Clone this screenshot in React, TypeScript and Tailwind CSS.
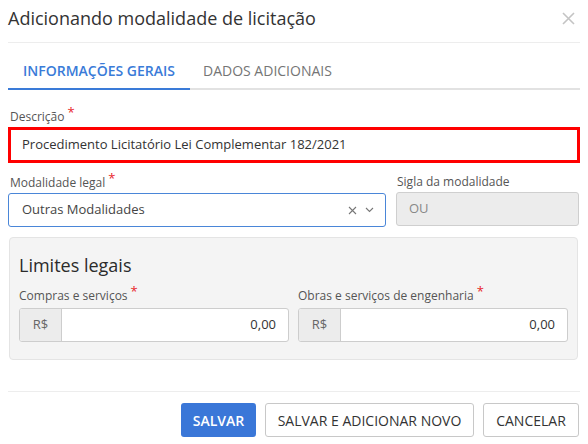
import React from "react";

const Req = () => (
  <span className="relative -top-[4px] ml-[3px] text-[13px] text-[#e8262b]">*</span>
);

export default function App() {
  return (
    <div
      className="w-[588px] h-[444px] bg-white px-2 overflow-hidden"
      style={{ fontFamily: '"Open Sans", "Noto Sans", sans-serif' }}
    >
      {/* Header */}
      <div className="h-[43px] flex items-center justify-between border-b border-[#ededed] pb-[6px]">
        <div className="text-[18px] leading-6 text-[#333]">Adicionando modalidade de licitação</div>
        <svg width="13" height="13" viewBox="0 0 13 13" className="mr-[5px]">
          <path d="M1 1 L12 12 M12 1 L1 12" stroke="#c4c4c4" strokeWidth="1.6" />
        </svg>
      </div>

      {/* Tabs */}
      <div className="flex border-b-2 border-[#e2e2e2]">
        <div className="-mb-[2px] border-b-2 border-[#3a7bd8] px-[15px] pt-[18px] pb-[7px] text-[14px] leading-5 font-semibold text-[#3a7bd8]">
          INFORMAÇÕES GERAIS
        </div>
        <div className="px-[13px] pt-[18px] pb-[7px] text-[14px] leading-5 text-[#757575]">
          DADOS ADICIONAIS
        </div>
      </div>

      {/* Descrição */}
      <div className="mt-[18px]">
        <div className="pl-[2px] text-[12px] leading-4 text-[#555]">
          Descrição
          <Req />
        </div>
        <div className="mt-[2px] h-[36px] border-[3px] border-[#ff0000] flex items-center pl-[11px] text-[13px] text-[#333]">
          Procedimento Licitatório Lei Complementar 182/2021
        </div>
      </div>

      {/* Modalidade row */}
      <div className="mt-[11px] flex gap-[10px]">
        <div className="w-[378px]">
          <div className="pl-[2px] text-[12px] leading-4 text-[#555]">
            Modalidade legal
            <Req />
          </div>
          <div className="mt-[2px] h-[34px] rounded-[3px] border border-[#4a86d8] flex items-center pl-[13px] pr-[11px] text-[13px] text-[#444]">
            <span className="flex-1">Outras Modalidades</span>
            <svg width="9" height="9" viewBox="0 0 9 9" className="mr-[8px]">
              <path d="M1 1 L8 8 M8 1 L1 8" stroke="#777" strokeWidth="1.1" />
            </svg>
            <svg width="9" height="6" viewBox="0 0 9 6">
              <path d="M1 1 L4.5 4.5 L8 1" stroke="#777" strokeWidth="1.1" fill="none" />
            </svg>
          </div>
        </div>
        <div className="w-[183px]">
          <div className="pl-[1px] text-[12px] leading-4 text-[#555]">Sigla da modalidade</div>
          <div className="mt-[2px] h-[34px] rounded-[3px] border border-[#cfcfcf] bg-[#ececec] flex items-center pl-[12px] text-[13px] text-[#888]">
            OU
          </div>
        </div>
      </div>

      {/* Limites legais panel */}
      <div className="mt-[10px] ml-[1px] mr-[2px] rounded-[4px] border border-[#e4e4e4] bg-[#f4f4f4] px-[9px] pt-[13px] pb-[17px]">
        <div className="text-[18px] leading-7 text-[#2b2b2b]">Limites legais</div>
        <div className="mt-[8px] flex gap-[9px]">
          {["Compras e serviços", "Obras e serviços de engenharia"].map((l) => (
            <div key={l} className="w-[270px]">
              <div className="text-[12px] leading-4 text-[#555]">
                {l}
                <Req />
              </div>
              <div className="mt-[4px] h-[34px] flex rounded-[3px] border border-[#cdcdcd] bg-white overflow-hidden">
                <div className="w-[42px] bg-[#ececec] border-r border-[#cdcdcd] flex items-center justify-center text-[13px] text-[#666]">
                  R$
                </div>
                <div className="flex-1 flex items-center justify-end pr-[12px] text-[13px] text-[#333]">0,00</div>
              </div>
            </div>
          ))}
        </div>
      </div>

      {/* Footer */}
      <div className="mt-[31px] border-t border-[#ededed] pt-[11px] flex justify-end gap-[9px] pr-[1px]">
        <button className="h-[34px] w-[75px] rounded-[3px] bg-[#3a77d8] text-white text-[14px] font-semibold">
          SALVAR
        </button>
        <button className="h-[34px] w-[209px] rounded-[3px] border border-[#c8c8c8] bg-white text-[14px] text-[#333]">
          SALVAR E ADICIONAR NOVO
        </button>
        <button className="h-[34px] w-[96px] rounded-[3px] border border-[#c8c8c8] bg-white text-[14px] text-[#333]">
          CANCELAR
        </button>
      </div>
    </div>
  );
}
